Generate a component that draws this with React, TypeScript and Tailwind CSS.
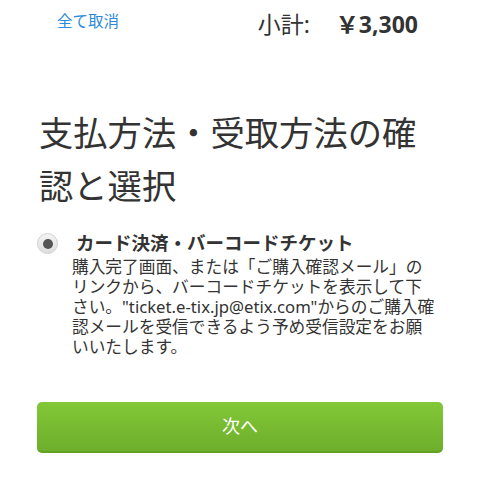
import React from "react";

const font = { fontFamily: '"Noto Sans", "Noto Sans CJK JP", sans-serif' };

export default function App() {
  return (
    <div className="w-[480px] h-[480px] bg-white overflow-hidden text-[#333]" style={font}>
      <div className="flex items-start justify-between pl-[57px] pr-[62px] pt-[9px] h-[56px]">
        <a className="text-[15.5px] leading-[24px] text-[#2b8ad8]">全て取消</a>
        <div className="flex items-baseline text-[23px] leading-[34px] mt-[-2px]">
          <span>小計:</span>
          <span className="ml-[26px] font-bold">￥3,300</span>
        </div>
      </div>

      <h1 className="mt-[50px] ml-[39px] w-[392px] text-[34.3px] leading-[53px] font-normal">
        支払方法・受取方法の確認と選択
      </h1>

      <div className="mt-[18px] flex pl-[37px]">
        <div className="mt-[3px] w-[21px] h-[21px] rounded-full border border-[#cfcfcf] bg-gradient-to-b from-[#f4f4f4] to-[#dedede] flex items-center justify-center shrink-0">
          <div className="w-[10px] h-[10px] rounded-full bg-[#555]" />
        </div>
        <div className="ml-[19px]">
          <div className="text-[18.5px] leading-[26px] font-bold -ml-[1px]">
            カード決済・バーコードチケット
          </div>
          <p className="-ml-[5px] w-[366px] text-[16.7px] leading-[20px] mt-[1px] text-[#333]">
            購入完了画面、または「ご購入確認メール」のリンクから、バーコードチケットを表示して下さい。"ticket.e-tix.jp@etix.com"からのご購入確認メールを受信できるよう予め受信設定をお願いいたします。
          </p>
        </div>
      </div>

      <div className="mt-[45px] px-[37px]">
        <button className="w-full h-[51px] rounded-[5px] bg-gradient-to-b from-[#82c837] to-[#6eae2c] border-b-2 border-[#62a026] text-white text-[18px] flex items-center justify-center">
          次へ
        </button>
      </div>
    </div>
  );
}
